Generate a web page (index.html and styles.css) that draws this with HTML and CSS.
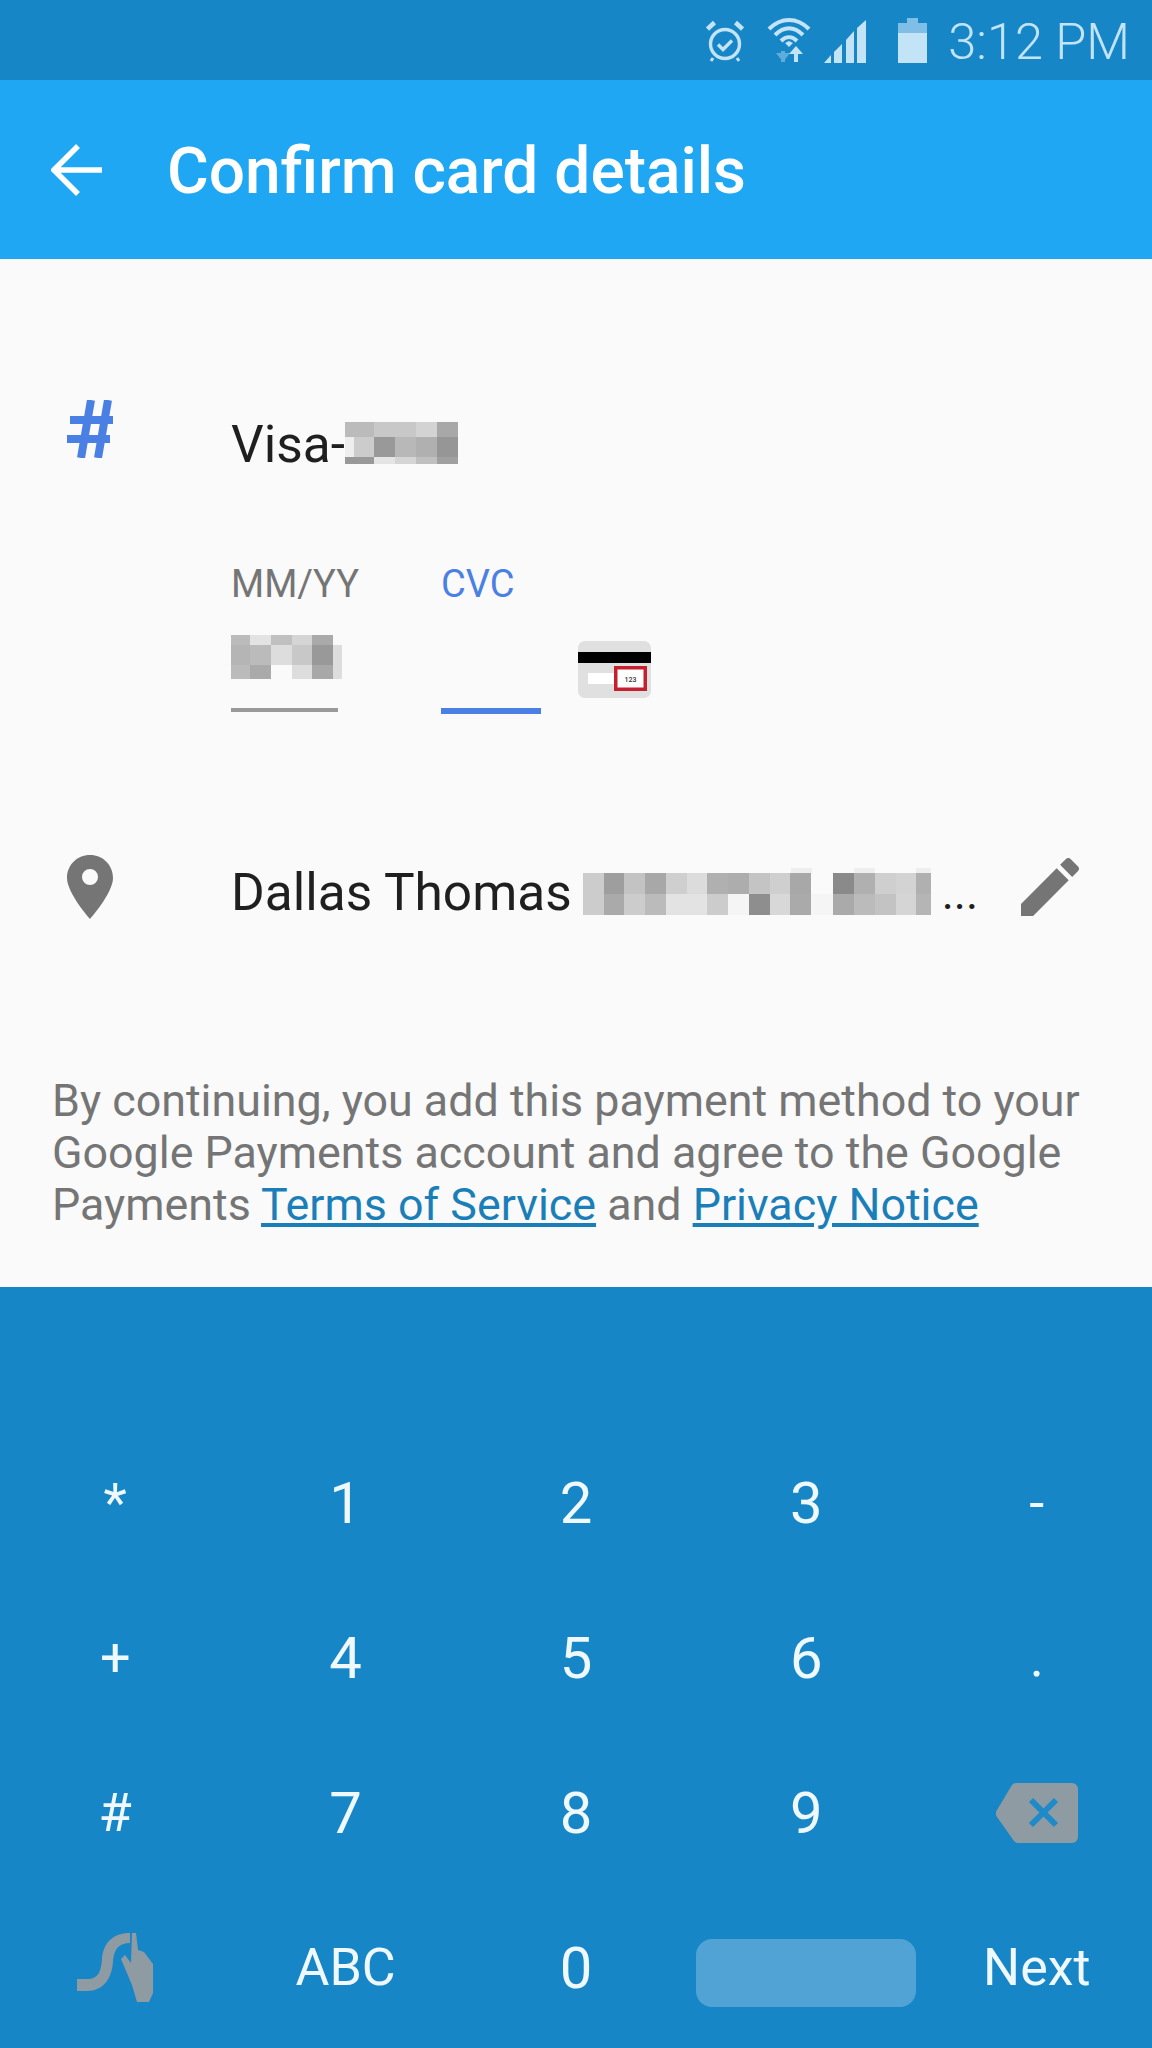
FILE: index.html
```html
<!doctype html>
<html>
  <head>
    <title>Confirm card details</title>
    <meta name="viewport" content="initial-scale=1, maximum-scale=1">
    <link rel="stylesheet" href="styles.css">
  </head>
  <body>
    <div class="status">
      <svg class="ic-alarm" viewBox="0 0 38 42" fill="none" stroke="#c3e4f7" stroke-width="3.4">
        <circle cx="19" cy="24" r="14.5"/>
        <path d="M12 24.5l5 5 9-9"/>
        <path d="M1.5 9L8.5 2.5M36.5 9L29.5 2.5" stroke-width="4.5"/>
        <path d="M7 38l-2 3M31 38l2 3" stroke-width="3"/>
      </svg>
      <svg class="ic-wifi" viewBox="0 0 44 45" fill="none" stroke="#c3e4f7" stroke-width="4">
        <path d="M2 11C14 -1 30 -1 42 11M8 17C17 8 27 8 36 17M14 23C19 18 25 18 30 23"/>
        <path d="M22 29l-4-4 4-2 4 2z" fill="#c3e4f7" stroke="none"/>
        <path d="M16 33v11" stroke="#5eaedd" stroke-width="4"/>
        <path d="M9 34h14l-7 9z" fill="#5eaedd" stroke="none" transform="translate(0 1)"/>
        <path d="M29 30v14" stroke-width="4"/>
        <path d="M22 36l7-8 7 8z" fill="#c3e4f7" stroke="none"/>
      </svg>
      <svg class="ic-signal" viewBox="0 0 42 43" fill="#c3e4f7">
        <path d="M0 43L7 35V43z"/>
        <path d="M10 43V32L18 24V43z"/>
        <path d="M22 43V20L30 11V43z"/>
        <path d="M33 43V8L42 0V43z"/>
      </svg>
      <svg class="ic-battery" viewBox="0 0 29 45">
        <path d="M9 0h11v5h9v10H0V5h9z" fill="#7fbfe6"/>
        <rect y="15" width="29" height="30" fill="#c3e4f7"/>
      </svg>
      <span class="clock">3:12 PM</span>
    </div>

    <div class="appbar">
      <svg class="ic-back" viewBox="0 0 52 52" fill="none" stroke="#fff" stroke-width="5.5">
        <path d="M51 26H4M27 2L3 26l24 24"/>
      </svg>
      <h1>Confirm card details</h1>
    </div>

    <div class="main">
      <div class="row">
        <svg class="ic-hash" viewBox="0 0 46 58" fill="none" stroke="#4a80e3" stroke-width="8">
          <path d="M24 0L14 58M41 0L31 58M3 20H46M0 39H43"/>
        </svg>
        <div class="row-text card-name">
          <span>Visa-</span>
          <svg width="113" height="42" shape-rendering="crispEdges">
            <rect width="29" height="15" fill="#bbb"/><rect x="29" width="42" height="15" fill="#c8c8c8"/><rect x="71" width="21" height="15" fill="#d3d3d3"/><rect x="92" width="21" height="15" fill="#a8a8a8"/>
            <rect y="15" width="9" height="20" fill="#eee"/><rect x="9" y="15" width="20" height="20" fill="#ccc"/><rect x="29" y="15" width="21" height="20" fill="#999"/><rect x="50" y="15" width="21" height="20" fill="#b8b8b8"/><rect x="71" y="15" width="21" height="20" fill="#b0b0b0"/><rect x="92" y="15" width="21" height="20" fill="#969696"/>
            <rect y="35" width="29" height="7" fill="#999"/><rect x="29" y="35" width="21" height="7" fill="#e5e5e5"/><rect x="50" y="35" width="21" height="7" fill="#d5d5d5"/><rect x="71" y="35" width="21" height="7" fill="#c0c0c0"/><rect x="92" y="35" width="21" height="7" fill="#a0a0a0"/>
          </svg>
        </div>
      </div>

      <div class="fields">
        <div class="field field-date">
          <label>MM/YY</label>
          <div class="value">
            <svg width="111" height="44" shape-rendering="crispEdges">
              <rect width="19" height="10" fill="#bbb"/><rect x="19" width="21" height="10" fill="#e3e3e3"/><rect x="40" width="21" height="10" fill="#c0c0c0"/><rect x="61" width="20" height="10" fill="#d5d5d5"/><rect x="81" width="21" height="10" fill="#aaa"/>
              <rect y="10" width="19" height="20" fill="#b5b5b5"/><rect x="19" y="10" width="21" height="20" fill="#bbb"/><rect x="40" y="10" width="21" height="20" fill="#ddd"/><rect x="61" y="10" width="20" height="20" fill="#c8c8c8"/><rect x="81" y="10" width="21" height="20" fill="#999"/><rect x="102" y="10" width="9" height="20" fill="#ddd"/>
              <rect y="30" width="19" height="14" fill="#bbb"/><rect x="19" y="30" width="21" height="14" fill="#aaa"/><rect x="61" y="30" width="20" height="14" fill="#ddd"/><rect x="81" y="30" width="21" height="14" fill="#a8a8a8"/><rect x="102" y="30" width="9" height="14" fill="#ddd"/>
            </svg>
          </div>
        </div>
        <div class="field field-cvc">
          <label>CVC</label>
          <div class="value"></div>
        </div>
        <svg class="ic-cvc" viewBox="0 0 73 57">
          <rect width="73" height="57" rx="7" fill="#e0e0e0"/>
          <rect y="11" width="73" height="11" fill="#000"/>
          <rect x="10" y="32" width="28" height="11" fill="#fff"/>
          <rect x="37.75" y="26.75" width="29.5" height="21.5" fill="#fff" stroke="#c5202f" stroke-width="3.5"/>
          <text x="52.5" y="40.5" text-anchor="middle" class="cvc-num">123</text>
        </svg>
      </div>

      <div class="row row-address">
        <svg class="ic-pin" viewBox="0 0 46 64">
          <path fill-rule="evenodd" fill="#757575" d="M23 0C10 0 0 10 0 23C0 38 23 64 23 64S46 38 46 23C46 10 36 0 23 0ZM23 14a8 8 0 1 1 0 16a8 8 0 1 1 0-16Z"/>
        </svg>
        <div class="row-text address">
          <span class="name">Dallas Thomas</span>
          <svg class="blur-addr" width="348" height="47" shape-rendering="crispEdges">
            <rect x="208" width="21" height="5" fill="#eee"/><rect x="271" width="21" height="5" fill="#eee"/><rect x="333" width="15" height="5" fill="#eee"/>
            <rect y="5" width="21" height="21" fill="#ccc"/><rect x="21" y="5" width="20" height="21" fill="#9e9e9e"/><rect x="41" y="5" width="21" height="21" fill="#c3c3c3"/><rect x="62" y="5" width="21" height="21" fill="#a8a8a8"/><rect x="83" y="5" width="21" height="21" fill="#cfcfcf"/><rect x="104" y="5" width="20" height="21" fill="#dcdcdc"/><rect x="124" y="5" width="21" height="21" fill="#b0b0b0"/><rect x="145" y="5" width="21" height="21" fill="#adadad"/><rect x="166" y="5" width="21" height="21" fill="#c4c4c4"/><rect x="187" y="5" width="20" height="21" fill="#cfcfcf"/><rect x="207" y="5" width="21" height="21" fill="#a8a8a8"/><rect x="250" y="5" width="21" height="21" fill="#8a8a8a"/><rect x="271" y="5" width="21" height="21" fill="#b0b0b0"/><rect x="292" y="5" width="21" height="21" fill="#cfcfcf"/><rect x="313" y="5" width="20" height="21" fill="#d3d3d3"/><rect x="333" y="5" width="15" height="21" fill="#b0b0b0"/>
            <rect y="26" width="21" height="21" fill="#ccc"/><rect x="21" y="26" width="20" height="21" fill="#aaa"/><rect x="41" y="26" width="21" height="21" fill="#ccc"/><rect x="62" y="26" width="21" height="21" fill="#bbb"/><rect x="83" y="26" width="41" height="21" fill="#e3e3e3"/><rect x="124" y="26" width="21" height="21" fill="#ccc"/><rect x="145" y="26" width="21" height="21" fill="#f5f5f5"/><rect x="166" y="26" width="21" height="21" fill="#8e8e8e"/><rect x="187" y="26" width="20" height="21" fill="#d8d8d8"/><rect x="207" y="26" width="21" height="21" fill="#aaa"/><rect x="228" y="26" width="22" height="21" fill="#f5f5f5"/><rect x="250" y="26" width="21" height="21" fill="#aaa"/><rect x="271" y="26" width="21" height="21" fill="#bbb"/><rect x="292" y="26" width="21" height="21" fill="#c3c3c3"/><rect x="313" y="26" width="20" height="21" fill="#d5d5d5"/><rect x="333" y="26" width="15" height="21" fill="#b5b5b5"/>
          </svg>
          <span class="more">...</span>
        </div>
        <svg class="ic-edit" viewBox="3 3 18 18">
          <path fill="#757575" d="M3 17.25V21h3.75L17.81 9.94l-3.75-3.75L3 17.25zM20.71 7.04c.39-.39.39-1.02 0-1.41l-2.34-2.34c-.39-.39-1.02-.39-1.41 0l-1.83 1.83 3.75 3.75 1.83-1.83z"/>
        </svg>
      </div>

      <p class="terms">By continuing, you add this payment method to your<br>Google Payments account and agree to the Google<br>Payments <a>Terms of Service</a> and <a>Privacy Notice</a></p>
    </div>

    <div class="keys">
      <div class="key sym">*</div>
      <div class="key">1</div>
      <div class="key">2</div>
      <div class="key">3</div>
      <div class="key sym">-</div>

      <div class="key sym">+</div>
      <div class="key">4</div>
      <div class="key">5</div>
      <div class="key">6</div>
      <div class="key sym">.</div>

      <div class="key sym">#</div>
      <div class="key">7</div>
      <div class="key">8</div>
      <div class="key">9</div>
      <div class="key">
        <svg class="ic-del" viewBox="0 0 82 60">
          <path fill="#8f9ba3" d="M20 0H76a6 6 0 0 1 6 6V54a6 6 0 0 1-6 6H22a6 6 0 0 1-4-2L1 34a6 6 0 0 1 0-7L16 2a6 6 0 0 1 4-2Z"/>
          <path d="M35 17L60 42M60 17L35 42" stroke="#1f8ac8" stroke-width="6"/>
        </svg>
      </div>

      <div class="key">
        <svg class="ic-swype" viewBox="0 0 76 69" fill="#8f9ba3">
          <path d="M0 46H10C22 46 24 38 25 26C26 10 36 0 53 0V10C42 10 37 16 36 28C35 46 26 58 10 58H0Z"/>
          <path d="M55 0H59L61 17L67 19L76 31V60L72 69H60L55 52L44 26L48 22L54 30Z"/>
        </svg>
      </div>
      <div class="key label">ABC</div>
      <div class="key">0</div>
      <div class="key"><div class="space"></div></div>
      <div class="key label">Next</div>
    </div>
  </body>
</html>
```
FILE: styles.css
```css
* {
  box-sizing: border-box;
  margin: 0;
  padding: 0;
}

html, body {
  width: 1152px;
  height: 2048px;
  overflow: hidden;
  font-family: Roboto, sans-serif;
}

svg {
  display: block;
  flex: none;
}

/* status bar */
.status {
  height: 80px;
  background: #1786c6;
  display: flex;
  align-items: center;
  justify-content: flex-end;
  padding-right: 22px;
}

.ic-alarm { width: 38px; height: 42px; margin-top: 2px; }
.ic-wifi { width: 44px; height: 45px; margin-left: 23px; }
.ic-signal { width: 42px; height: 43px; margin-left: 13px; margin-top: 2px; }
.ic-battery { width: 29px; height: 45px; margin-left: 32px; }

.clock {
  margin-left: 21px;
  padding-top: 4px;
  font-size: 50.5px;
  font-weight: 300;
  color: #c3e4f7;
  line-height: 76px;
}

/* app bar */
.appbar {
  height: 179px;
  background: #1fa7f4;
  display: flex;
  align-items: center;
  padding-left: 51px;
}

.ic-back { width: 52px; height: 52px; }

.appbar h1 {
  margin-left: 64px;
  padding-top: 3px;
  font-size: 64px;
  font-weight: 500;
  color: #fff;
}

/* form */
.main {
  height: 1028px;
  background: #fafafa;
  padding: 141px 52px 0;
}

.row {
  display: flex;
  height: 64px;
  padding-left: 15px;
}

.ic-hash { width: 46px; height: 58px; }

.row-text {
  margin-left: 118px;
  display: flex;
  font-size: 51.4px;
  color: #1f1f1f;
}

.card-name {
  align-items: flex-start;
  padding-top: 22px;
  line-height: 45px;
}

.fields {
  display: flex;
  align-items: flex-end;
  margin-top: 98px;
  padding-left: 179px;
}

.field label {
  display: block;
  font-size: 38px;
  line-height: 44px;
}

.value {
  height: 106px;
  padding-top: 29px;
}

.field-date {
  width: 107px;
  margin-bottom: 2px;
  color: #757575;
}

.field-date .value { border-bottom: 4px solid #999; }

.field-cvc {
  width: 100px;
  margin-left: 103px;
  color: #4a80e3;
}

.field-cvc .value { border-bottom: 6px solid #4a80e3; height: 108px; }

.ic-cvc {
  width: 73px;
  height: 57px;
  margin-left: 37px;
  margin-bottom: 16px;
}

.cvc-num {
  font-size: 7px;
  font-weight: 500;
  fill: #333;
}

.row-address {
  margin-top: 141px;
  align-items: center;
}

.ic-pin { width: 46px; height: 64px; }

.address {
  flex: 1;
  align-items: center;
  line-height: 64px;
}

.name { margin-top: 12px; }

.blur-addr { margin-left: 11px; margin-top: 9px; }

.more {
  margin-left: 11px;
  margin-top: 12px;
  font-size: 46px;
}

.ic-edit { width: 58px; height: 58px; margin-right: 21px; }

.terms {
  margin-top: 156px;
  font-size: 44.8px;
  line-height: 52px;
  color: #757575;
}

.terms a {
  color: #1a7fb8;
  text-decoration: underline;
}

/* number pad */
.keys {
  height: 761px;
  background: #1786c6;
  padding-top: 138px;
  display: grid;
  grid-template-columns: repeat(5, 1fr);
  grid-auto-rows: 155px;
}

.key {
  display: flex;
  align-items: center;
  justify-content: center;
  font-size: 58px;
  color: #eef8fd;
}

.key.sym { font-size: 54px; }
.key.label { font-size: 52px; }

.ic-del { width: 82px; height: 60px; }
.ic-swype { width: 76px; height: 69px; }

.space {
  width: 220px;
  height: 68px;
  margin-top: 10px;
  border-radius: 16px;
  background: #52a3d5;
}
```
